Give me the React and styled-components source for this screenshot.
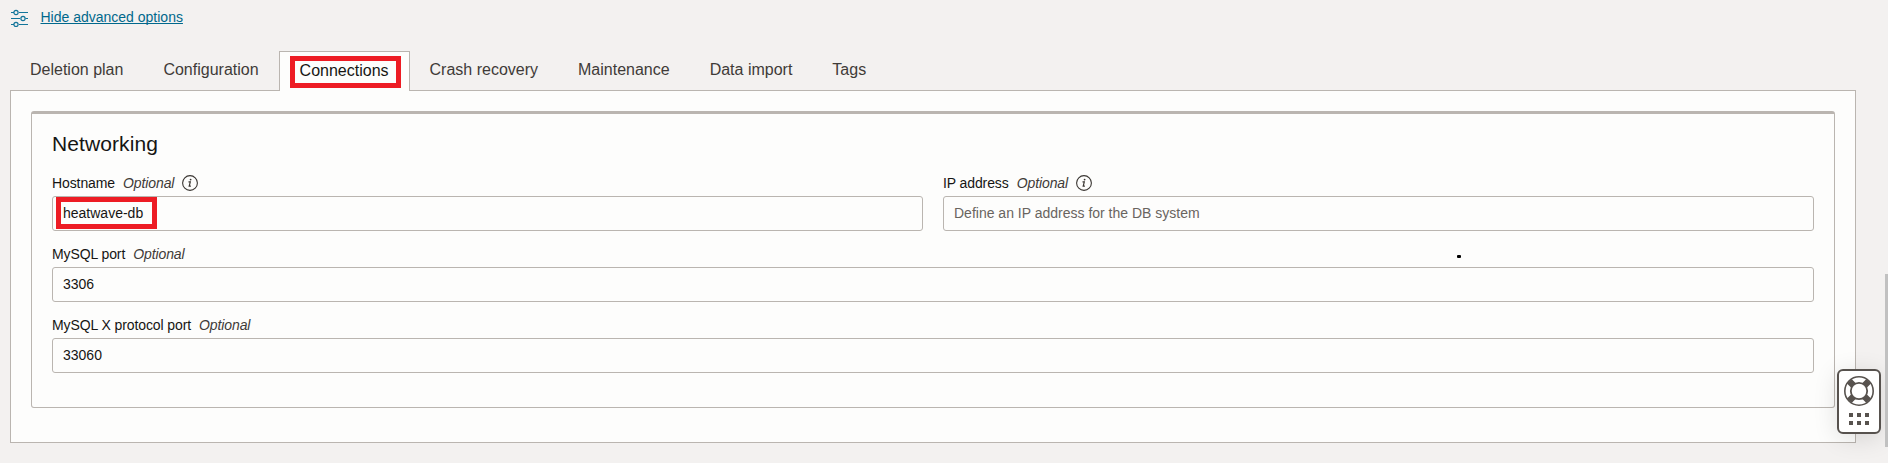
import React from "react";
import styled, { createGlobalStyle, css } from "styled-components";

const GlobalStyle = createGlobalStyle`
  * { box-sizing: border-box; }
  body {
    margin: 0;
    background: #f3f1f0;
    color: #161513;
    font: 14px/16px "Liberation Sans", Arial, sans-serif;
    overflow: hidden;
  }
`;

const Page = styled.main`
  position: relative;
  height: 463px;
  padding: 0 32px 0 10px;
`;

const OptionsToggle = styled.div`
  display: flex;
  align-items: flex-start;
  height: 51px;
  padding-top: 9px;
  gap: 11.5px;
  svg { display: block; margin-left: 1px; }
`;

const ToggleLink = styled.a`
  color: #00688c;
  text-decoration: underline;
  text-underline-offset: 1px;
  text-decoration-thickness: 1px;
  text-decoration-skip-ink: none;
`;

const TabBar = styled.nav`
  display: flex;
  height: 40px;
  margin-bottom: -1px;
`;

const Tab = styled.div`
  padding: 10px 20px 0;
  font-size: 16px;
  line-height: 18px;
  white-space: nowrap;
  color: #3f3b38;
  ${(p) =>
    p.$active &&
    css`
      position: relative;
      color: #161513;
      background: #fdfdfc;
      border: 1px solid #bab5b0;
      border-bottom: 0;
    `}
`;

const Marker = styled.span`
  position: absolute;
  border: 5px solid #ed1c24;
  pointer-events: none;
  left: ${(p) => p.$left}px;
  top: ${(p) => p.$top}px;
  width: ${(p) => p.$width}px;
  height: 32px;
`;

const Panel = styled.section`
  height: 353px;
  padding: 20px;
  background: #fdfdfc;
  border: 1px solid #bab5b0;
`;

const Card = styled.div`
  height: 297px;
  padding: 17px 20px 0;
  border: 1px solid #bab5b0;
  border-top-width: 3px;
  border-radius: 3px;
`;

const Heading = styled.h2`
  margin: 0 0 18px;
  font-size: 21px;
  line-height: 26px;
  font-weight: 400;
  letter-spacing: 0.1px;
`;

const Fields = styled.div`
  display: grid;
  grid-template-columns: 1fr 1fr;
  column-gap: 20px;
  row-gap: 15px;
`;

const FieldBox = styled.div`
  position: relative;
  grid-column: ${(p) => (p.$wide ? "1 / -1" : "auto")};
`;

const Label = styled.div`
  display: flex;
  height: 21px;
  letter-spacing: -0.1px;
  svg { display: block; margin-left: 8px; }
`;

const Optional = styled.em`
  margin-left: 8px;
  color: #3f3b38;
`;

const Value = styled.div`
  height: 35px;
  padding: 8px 10px;
  border: 1px solid #bab5b0;
  border-radius: 3px;
  color: ${(p) => (p.$placeholder ? "#69645f" : "#161513")};
`;

const Dot = styled.span`
  position: absolute;
  left: 1457px;
  top: 255px;
  width: 4px;
  height: 3px;
  border-radius: 1px;
  background: #000;
`;

const HelpWidget = styled.button`
  position: absolute;
  left: 1837px;
  top: 369px;
  width: 44px;
  height: 65px;
  padding: 0;
  border: 2px solid #57524e;
  border-radius: 6px;
  background: #fff;
  box-shadow: 0 4px 24px rgba(0, 0, 0, 0.12);
  svg { display: block; }
`;

const ScrollThumb = styled.span`
  position: absolute;
  left: 1885px;
  top: 274px;
  width: 3px;
  height: 173px;
  background: #c1c1c1;
`;

const SlidersIcon = () => (
  <svg width="18" height="18" viewBox="0 0 18 18" fill="none" stroke="#12759a">
    <path d="M0 3.5h3M8 3.5h9M0 9.5h9M14.5 9.5H17M0 15.5h3M8 15.5h9" />
    <g strokeWidth="1.2">
      <circle cx="5" cy="3.5" r="2.1" />
      <circle cx="12" cy="9.5" r="2.1" />
      <circle cx="5" cy="15.5" r="2.1" />
    </g>
  </svg>
);

const InfoIcon = () => (
  <svg width="16" height="16" viewBox="0 0 16 16" fill="none" stroke="#3a3632">
    <circle cx="8" cy="8" r="7.4" strokeWidth="1.1" />
    <path d="M6.5 6.9h1.8L7.2 11.1h1.7" strokeWidth="1.2" />
    <circle cx="8.6" cy="4.6" r="0.9" fill="#3a3632" stroke="none" />
  </svg>
);

const LifebuoyIcon = () => (
  <svg width="40" height="61" viewBox="0 0 40 61" fill="none" stroke="#57524e">
    <path d="M10.3 10.3l6 6M29.7 10.3l-6 6M10.3 29.7l6-6M29.7 29.7l-6-6" strokeWidth="6.5" />
    <circle cx="20" cy="20" r="14.2" strokeWidth="1.6" />
    <circle cx="20" cy="20" r="8.2" strokeWidth="1.8" fill="#fff" />
    <path d="M10 44h4M18 44h4M26 44h4M10 52h4M18 52h4M26 52h4" strokeWidth="4" />
  </svg>
);

const Field = ({ label, value, placeholder, info, wide, marked }) => (
  <FieldBox $wide={wide}>
    <Label>
      <span>{label}</span>
      <Optional>Optional</Optional>
      {info && <InfoIcon />}
    </Label>
    <Value $placeholder={!value}>{value || placeholder}</Value>
    {marked && <Marker $left={4} $top={22} $width={101} />}
  </FieldBox>
);

const tabs = [
  "Deletion plan",
  "Configuration",
  "Connections",
  "Crash recovery",
  "Maintenance",
  "Data import",
  "Tags",
];

export default function App() {
  return (
    <Page>
      <GlobalStyle />
      <OptionsToggle>
        <SlidersIcon />
        <ToggleLink>Hide advanced options</ToggleLink>
      </OptionsToggle>
      <TabBar>
        {tabs.map((name) => (
          <Tab key={name} $active={name === "Connections"}>
            {name}
            {name === "Connections" && <Marker $left={10} $top={4} $width={111} />}
          </Tab>
        ))}
      </TabBar>
      <Panel>
        <Card>
          <Heading>Networking</Heading>
          <Fields>
            <Field label="Hostname" value="heatwave-db" info marked />
            <Field label="IP address" placeholder="Define an IP address for the DB system" info />
            <Field label="MySQL port" value="3306" wide />
            <Field label="MySQL X protocol port" value="33060" wide />
          </Fields>
        </Card>
      </Panel>
      <Dot />
      <HelpWidget aria-label="Help">
        <LifebuoyIcon />
      </HelpWidget>
      <ScrollThumb />
    </Page>
  );
}
